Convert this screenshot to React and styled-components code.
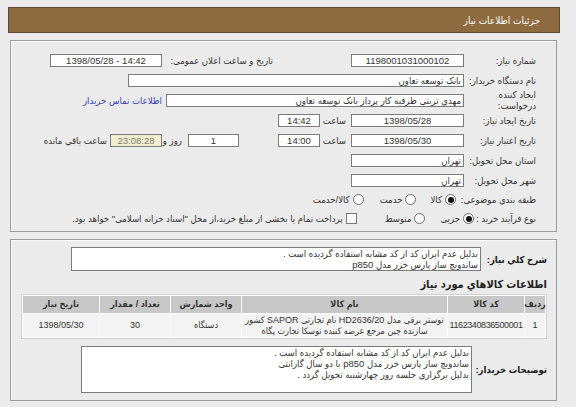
import React from 'react';
import styled, { createGlobalStyle } from 'styled-components';

const Global = createGlobalStyle`
  body {
    margin: 0;
    background: #ebebeb;
    font-family: "Liberation Sans", "DejaVu Sans Condensed", "DejaVu Sans", sans-serif;
    font-stretch: condensed;
    font-size: 9.5px;
    color: #333;
  }
`;

const Page = styled.div`
  padding: 7px 0 7px 8px;
  width: 552px;
  direction: rtl;
`;

const Header = styled.div`
  height: 24px;
  background: #8d6b3f;
  border: 1px solid #5b4a35;
  color: #fff;
  display: flex;
  align-items: center;
  padding-right: 19px;
  font-size: 10px;
`;

const Panel = styled.div`
  margin: ${p => p.$top}px 3px 0 2px;
  width: 547px;
  box-sizing: border-box;
  border: 1px solid #9c9c9c;
  box-shadow: inset 1px 1px 0 #fafafa;
  padding: ${p => p.$pad};
`;

const Row = styled.div`
  display: flex;
  align-items: center;
  height: ${p => p.$h || 20}px;
  margin-top: ${p => p.$mt || 0}px;
`;

const Label = styled.div`
  flex-shrink: 0;
  width: ${p => (p.$w ? `${p.$w}px` : 'auto')};
  margin-left: ${p => p.$gap || 0}px;
  text-align: right;
  white-space: nowrap;
  line-height: 11px;
  font-weight: ${p => (p.$bold ? 'bold' : 'normal')};
  font-size: ${p => (p.$bold ? 9.5 : 9.5)}px;
  color: ${p => (p.$bold ? '#222' : '#333')};
`;

const Field = styled.div`
  flex-shrink: 0;
  box-sizing: border-box;
  width: ${p => p.$w}px;
  height: ${p => p.$h || 13}px;
  margin-left: ${p => p.$gap || 0}px;
  border: 1px solid #7b7b7b;
  background: ${p => (p.$yellow ? '#efefcf' : '#fff')};
  color: ${p => (p.$yellow ? '#808070' : '#333')};
  text-align: ${p => p.$align || 'center'};
  direction: ${p => (p.$ltr ? 'ltr' : 'rtl')};
  line-height: 11px;
  padding: 0 2px;
  white-space: nowrap;
  overflow: hidden;
`;

const TextArea = styled(Field)`
  white-space: normal;
  padding: 0 2px;
`;

const Link = styled.a`
  color: #3340b0;
  text-decoration: none;
  white-space: nowrap;
`;

const Options = styled.div`
  display: flex;
  align-items: center;
`;

const Option = styled.label`
  display: flex;
  align-items: center;
  gap: 3px;
  margin-left: ${p => p.$gap || 14}px;
  white-space: nowrap;
`;

const Radio = styled.span`
  width: 9px;
  height: 9px;
  border-radius: 50%;
  border: 1px solid #6a6a6a;
  background: #fff;
  display: inline-flex;
  align-items: center;
  justify-content: center;
  &::after {
    content: '';
    width: 6px;
    height: 6px;
    border-radius: 50%;
    background: ${p => (p.$on ? '#111' : 'transparent')};
  }
`;

const Check = styled.span`
  width: 9px;
  height: 9px;
  border: 1px solid #7a7a7a;
  background: #fafafa;
`;

const Title = styled.div`
  margin: 7px 0 4px;
  height: 12px;
  line-height: 12px;
  font-weight: bold;
  font-size: 11px;
  color: #222;
`;

const Grid = styled.div`
  display: grid;
  grid-template-columns: 20px 76px 205px 70px 70px 76px;
  gap: 1px;
  padding: 1px;
  border: 1px solid #cfcfcf;
  background: #fff;
`;

const Cell = styled.div`
  display: flex;
  align-items: center;
  justify-content: center;
  text-align: center;
  white-space: nowrap;
  height: ${p => (p.$head ? 17 : 23)}px;
  background: ${p => (p.$head ? '#c7c7c7' : '#f3f3f3')};
  font-weight: ${p => (p.$head ? 'bold' : 'normal')};
  font-size: 9px;
  letter-spacing: ${p => (p.$tight ? '-0.4px' : 'normal')};
  line-height: 11px;
  color: #333;
`;

const heads = ['ردیف', 'کد کالا', 'نام کالا', 'واحد شمارش', 'تعداد / مقدار', 'تاریخ نیاز'];

const App = () => {
  return (
    <Page>
      <Global />
      <Header>جزئیات اطلاعات نیاز</Header>

      <Panel $top={7} $pad="9px 20px 3px 10px">
        <Row>
          <Label $w={72}>شماره نیاز:</Label>
          <Field $w={113} $gap={78}>1198001031000102</Field>
          <Label $w={106} $gap={5}>تاریخ و ساعت اعلان عمومی:</Label>
          <Field $w={112} $ltr>1398/05/28 - 14:42</Field>
        </Row>
        <Row>
          <Label $w={72}>نام دستگاه خریدار:</Label>
          <Field $w={336} $align="right">بانک توسعه تعاون</Field>
        </Row>
        <Row>
          <Label $w={72}>ایجاد کننده<br />درخواست:</Label>
          <Field $w={298} $gap={4} $align="right">مهدی تربتی طرفیه کار پرداز  بانک توسعه تعاون</Field>
          <Link href="#">اطلاعات تماس خریدار</Link>
        </Row>
        <Row>
          <Label $w={72}>تاریخ ایجاد نیاز:</Label>
          <Field $w={113} $gap={5}>1398/05/28</Field>
          <Label $w={23} $gap={3}>ساعت</Label>
          <Field $w={42}>14:42</Field>
        </Row>
        <Row>
          <Label $w={72}>تاریخ اعتبار نیاز:</Label>
          <Field $w={113} $gap={5}>1398/05/30</Field>
          <Label $w={23} $gap={3}>ساعت</Label>
          <Field $w={42} $gap={39}>14:00</Field>
          <Field $w={51} $gap={6}>1</Field>
          <Label $w={15} $gap={5}>روز و</Label>
          <Field $w={52} $gap={3} $yellow>23:08:28</Field>
          <Label>ساعت باقي مانده</Label>
        </Row>
        <Row>
          <Label $w={72}>استان محل تحویل:</Label>
          <Field $w={113} $align="right">تهران</Field>
        </Row>
        <Row>
          <Label $w={72}>شهر محل تحویل:</Label>
          <Field $w={113} $align="right">تهران</Field>
        </Row>
        <Row $h={19}>
          <Label $w={80}>طبقه بندی موضوعی:</Label>
          <Options>
            <Option><Radio $on />کالا</Option>
            <Option $gap={16}><Radio />خدمت</Option>
            <Option><Radio />کالا/خدمت</Option>
          </Options>
        </Row>
        <Row $h={19}>
          <Label $w={62}>نوع فرآیند خرید :</Label>
          <Options>
            <Option $gap={15}><Radio $on />جزیی</Option>
            <Option $gap={28}><Radio />متوسط</Option>
            <Option><Check />پرداخت تمام یا بخشی از مبلغ خرید،از محل "اسناد خزانه اسلامی" خواهد بود.</Option>
          </Options>
        </Row>
      </Panel>

      <Panel $top={7} $pad="7px 9px 7px 10px">
        <Row $h={24}>
          <Label $w={64} $gap={2} $bold>شرح کلي نیاز:</Label>
          <TextArea $w={410} $h={24} $align="right">
            بدلیل عدم ایران کد از کد مشابه استفاده گردیده است .<br />
            ساندویچ ساز پارس خزر مدل p850
          </TextArea>
        </Row>
        <Title>اطلاعات کالاهاي مورد نیاز</Title>
        <Grid>
          {heads.map(h => (
            <Cell key={h} $head>{h}</Cell>
          ))}
          <Cell>1</Cell>
          <Cell $tight>1162340836500001</Cell>
          <Cell>
            توستر برقی مدل HD2636/20 نام تجارتی SAPOR کشور<br />
            سازنده چین مرجع عرضه کننده توسکا تجارت پگاه
          </Cell>
          <Cell>دستگاه</Cell>
          <Cell>30</Cell>
          <Cell>1398/05/30</Cell>
        </Grid>
        <Row $h={47} $mt={7}>
          <Label $w={70} $gap={5} $bold>توضیحات خریدار:</Label>
          <TextArea $w={391} $h={47} $align="right">
            بدلیل عدم ایران کد از کد مشابه استفاده گردیده است .<br />
            ساندویچ ساز پارس خزر مدل p850 با دو سال گارانتی<br />
            بدلیل برگزاری جلسه روز چهارشنبه تحویل گردد .
          </TextArea>
        </Row>
      </Panel>
    </Page>
  );
};

export default App;
